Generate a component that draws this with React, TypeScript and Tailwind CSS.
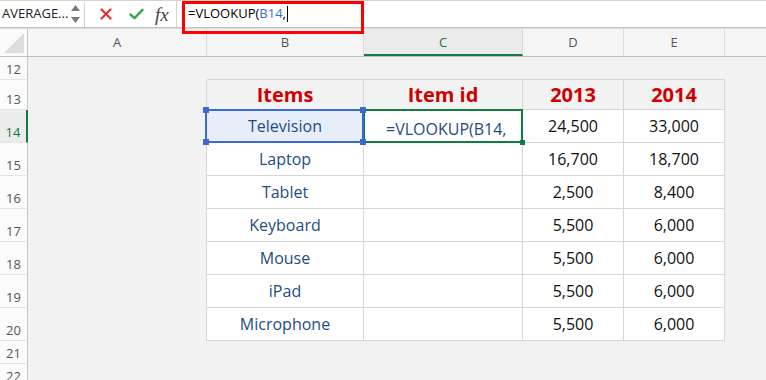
import React from 'react';

const COLS = [
  { key: 'A', w: 'w-[179px]' },
  { key: 'B', w: 'w-[157px]' },
  { key: 'C', w: 'w-[159px]' },
  { key: 'D', w: 'w-[101px]' },
  { key: 'E', w: 'w-[101px]' },
];

type Row = { n: number; h: string; cells?: [string, string, string, string]; header?: boolean };

const ROWS: Row[] = [
  { n: 12, h: 'h-[23px]' },
  { n: 13, h: 'h-[30px]', header: true, cells: ['Items', 'Item id', '2013', '2014'] },
  { n: 14, h: 'h-[33px]', cells: ['Television', '', '24,500', '33,000'] },
  { n: 15, h: 'h-[33px]', cells: ['Laptop', '', '16,700', '18,700'] },
  { n: 16, h: 'h-[33px]', cells: ['Tablet', '', '2,500', '8,400'] },
  { n: 17, h: 'h-[33px]', cells: ['Keyboard', '', '5,500', '6,000'] },
  { n: 18, h: 'h-[33px]', cells: ['Mouse', '', '5,500', '6,000'] },
  { n: 19, h: 'h-[33px]', cells: ['iPad', '', '5,500', '6,000'] },
  { n: 20, h: 'h-[33px]', cells: ['Microphone', '', '5,500', '6,000'] },
  { n: 21, h: 'h-[23px]' },
  { n: 22, h: 'h-[23px]' },
];

const FormulaBar = () => (
  <div className="relative flex h-[28px] items-center border-t border-b border-t-[#d6d3c6] border-b-[#c4c4c4] bg-white">
    {/* Name box */}
    <div className="flex h-[25px] w-[85px] items-center justify-between border-r border-[#cfcfcf] pl-[2px] pr-[4px] text-[13px] text-[#222]">
      <span>AVERAGE...</span>
      <div className="flex flex-col items-center gap-[6px]">
        <svg width="9" height="6" viewBox="0 0 9 6"><path d="M4.5 0L9 6H0z" fill="#7a7a7a" /></svg>
        <svg width="9" height="6" viewBox="0 0 9 6"><path d="M0 0H9L4.5 6z" fill="#7a7a7a" /></svg>
      </div>
    </div>
    {/* cancel / enter / fx */}
    <div className="flex h-full w-[92px] items-center border-r border-[#d4d4d4] pl-[15px]">
      <svg width="12" height="12" viewBox="0 0 12 12">
        <path d="M1.5 1.5L10.5 10.5M10.5 1.5L1.5 10.5" stroke="#e5322f" strokeWidth="2.2" strokeLinecap="round" />
      </svg>
      <svg className="ml-[17px]" width="15" height="12" viewBox="0 0 15 12">
        <path d="M1.5 6.5L5.5 10.2L13.5 1.8" stroke="#35a84c" strokeWidth="2.4" fill="none" strokeLinecap="round" strokeLinejoin="round" />
      </svg>
      <span className="ml-[11px] font-['Liberation_Serif',serif] text-[19px] italic leading-none text-[#444]">fx</span>
    </div>
    <div className="flex flex-1 items-center pl-[11px] text-[13px] text-black">
      <span>=VLOOKUP(</span>
      <span className="text-[#3a6fd0]">B14</span>
      <span>,</span>
      <span className="ml-[1px] h-[16px] w-px bg-black" />
    </div>
    {/* red highlight */}
    <div className="pointer-events-none absolute left-[182px] top-[0px] z-20 h-[33px] w-[182px] border-[3px] border-[#ff0000]" />
  </div>
);

const ColumnHeader = () => (
  <div className="flex h-[29px] border-t border-b border-t-[#dcdcdc] border-b-[#bfbfbf] bg-[#f5f5f5] text-[13px] text-[#555]">
    <div className="relative w-[28px] border-r border-[#c6c6c6] bg-[#fafafa]">
      <svg className="absolute bottom-[3px] right-[3px]" width="20" height="20" viewBox="0 0 20 20">
        <path d="M20 0V20H0z" fill="#dedede" />
      </svg>
    </div>
    {COLS.map((c) => (
      <div
        key={c.key}
        className={`${c.w} flex items-center justify-center border-r border-[#dadada] ${
          c.key === 'C' ? 'border-b-2 border-b-[#107c41] bg-[#ebebeb] pt-[2px] text-[#107c41]' : ''
        }`}
      >
        {c.key}
      </div>
    ))}
    <div className="flex-1" />
  </div>
);

const SheetRow = ({ row }: { row: Row }) => {
  const active = row.n === 14;
  const inTable = !!row.cells;
  return (
    <div className={`flex ${row.h}`}>
      <div
        className={`flex w-[28px] items-end justify-center border-b border-r pb-[1px] text-[13px] leading-[18px] ${
          active
            ? 'border-b-[#e4e4e4] border-r-2 border-r-[#107c41] bg-[#ececec] text-[#107c41]'
            : 'border-b-[#e4e4e4] border-r-[#c6c6c6] bg-[#fbfbfb] text-[#555]'
        }`}
      >
        {row.n}
      </div>
      <div className={`w-[179px] ${inTable ? 'border-r border-[#d6d6d6]' : ''}`} />
      {[1, 2, 3, 4].map((i) => {
        const col = COLS[i];
        if (!row.cells) {
          return <div key={col.key} className={`${col.w} ${row.n === 12 ? 'border-b border-[#d6d6d6]' : ''}`} />;
        }
        const text = row.cells[i - 1];
        if (row.header) {
          return (
            <div
              key={col.key}
              className={`${col.w} flex items-center justify-center border-r border-b border-[#d6d6d6] bg-[#f2f2f2] text-[20px] font-bold text-[#d00000]`}
            >
              {text}
            </div>
          );
        }
        const isB = i === 1;
        const isC = i === 2;
        return (
          <div
            key={col.key}
            className={`${col.w} relative flex items-center justify-center border-r border-b border-[#d6d6d6] text-[16px] ${
              isB ? 'text-[#1f4b86]' : 'text-[#111]'
            } ${active && isB ? 'bg-[#e8eef9]' : 'bg-white'}`}
          >
            {active && isC ? (
              <>
                <span className="absolute bottom-[1px] left-[22px] text-[#1f4b86]">=VLOOKUP(B14,</span>
                <div className="absolute -top-[1px] -left-[1px] -right-[1px] -bottom-[1px] z-10 border-2 border-[#107c41]" />
                <div className="absolute -bottom-[3px] -right-[3px] z-10 h-[5px] w-[5px] bg-[#107c41]" />
              </>
            ) : (
              text
            )}
            {active && isB && (
              <>
                <div className="absolute -top-[1px] -left-[2px] -right-[1px] -bottom-[1px] z-20 border-2 border-[#3a6ccf]" />
                <div className="absolute -top-[3px] -left-[4px] z-20 h-[6px] w-[6px] bg-[#3a6ccf]" />
                <div className="absolute -top-[3px] -right-[3px] z-20 h-[6px] w-[6px] bg-[#3a6ccf]" />
                <div className="absolute -bottom-[3px] -left-[4px] z-20 h-[6px] w-[6px] bg-[#3a6ccf]" />
                <div className="absolute -bottom-[3px] -right-[3px] z-20 h-[6px] w-[6px] bg-[#3a6ccf]" />
              </>
            )}
          </div>
        );
      })}
      <div className="flex-1" />
    </div>
  );
};

export default function App() {
  return (
    <div className="h-[380px] w-[766px] overflow-hidden bg-[#f2f2f2] font-['Open_Sans',sans-serif]">
      <FormulaBar />
      <ColumnHeader />
      <div className="flex flex-col">
        {ROWS.map((r) => (
          <SheetRow key={r.n} row={r} />
        ))}
      </div>
    </div>
  );
}
